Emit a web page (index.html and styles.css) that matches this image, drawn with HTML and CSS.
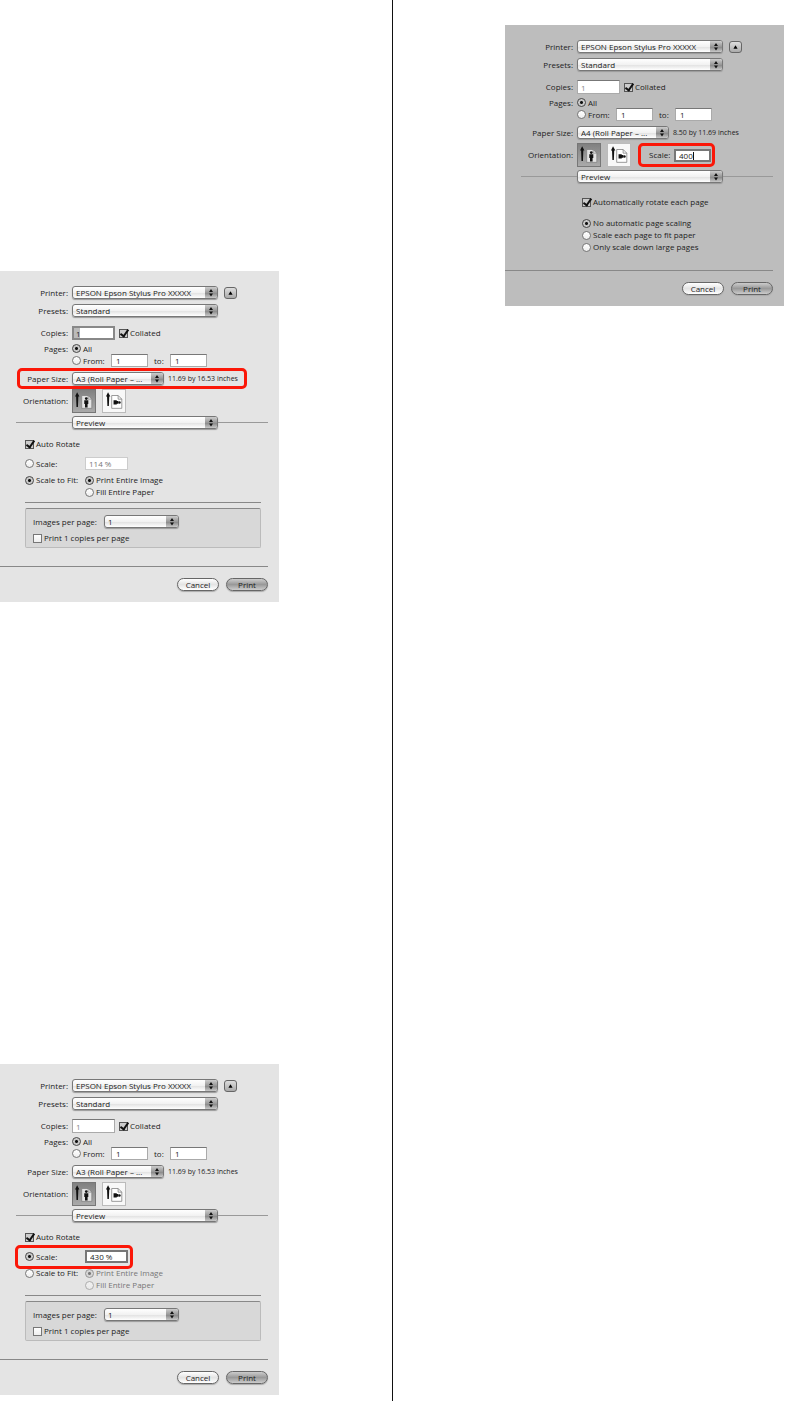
FILE: index.html
```html
<!DOCTYPE html>
<html lang="en">
<head>
    <meta charset="UTF-8">
    <meta name="viewport" content="width=device-width, initial-scale=1">
    <title>Print settings</title>
    <link rel="stylesheet" href="styles.css">
</head>
<body>

<svg class="defs" aria-hidden="true">
    <symbol id="arrows" viewBox="0 0 12 11">
        <path d="M6 2L8 5H4zM6 9.5L8 6.5H4z" fill="#111"/>
    </symbol>
    <symbol id="portrait" viewBox="0 0 24 23">
        <path d="M4.500 2L7 6.500H5.800L5.400 18H3.800L3.400 6.500H2.200z" fill="#111"/>
        <path d="M9.500 5.500h7l4 4v10h-11z" fill="#e4e4e4" stroke="#777" stroke-width=".7"/>
        <path d="M16.500 5.500v4h4" fill="none" stroke="#777" stroke-width=".7"/>
        <circle cx="14.500" cy="8.800" r="1.500" fill="#111"/>
        <path d="M12.300 10.700h4.400v4h-.8v3.800h-2.800v-3.800h-.8z" fill="#111"/>
    </symbol>
    <symbol id="landscape" viewBox="0 0 24 23">
        <path d="M5.500 2L8 6.500H6.800L6.400 17H4.800L4.400 6.500H3.200z" fill="#111"/>
        <path d="M9.500 5.500h7l4 4v10h-11z" fill="#fff" stroke="#777" stroke-width=".8"/>
        <path d="M16.500 5.500v4h4" fill="none" stroke="#777" stroke-width=".8"/>
        <path d="M11.500 10.800h3.500v.8h1.800v3h-1.800v.8h-3.500z" fill="#111"/>
        <circle cx="18" cy="13.100" r="1.300" fill="#111"/>
    </symbol>
</svg>

<main class="page">
    <div class="column left">

        <form class="dialog">
            <div class="row">
                <label class="name" for="a-printer">Printer:</label>
                <span class="select wide"><select id="a-printer"><option>EPSON Epson Stylus Pro XXXXX</option></select><svg><use href="#arrows"/></svg></span>
                <button type="button" class="toggle" aria-label="Hide details"><svg viewBox="0 0 12 12"><path d="M6 4L8.500 8H3.500z"/></svg></button>
            </div>
            <div class="row presets">
                <label class="name" for="a-presets">Presets:</label>
                <span class="select wide"><select id="a-presets"><option>Standard</option></select><svg><use href="#arrows"/></svg></span>
            </div>
            <div class="row copies">
                <label class="name" for="a-copies">Copies:</label>
                <input type="text" class="field selected" id="a-copies" value="1">
                <label class="option"><input type="checkbox" checked>Collated</label>
            </div>
            <div class="row all">
                <span class="name">Pages:</span>
                <label class="option"><input type="radio" name="a-pages" checked>All</label>
            </div>
            <div class="row">
                <span class="name"></span>
                <label class="option from"><input type="radio" name="a-pages">From:</label>
                <input type="text" class="field short" value="1" aria-label="From page">
                <label class="to" for="a-to">to:</label>
                <input type="text" class="field short" id="a-to" value="1">
            </div>
            <div class="row paper">
                <label class="name" for="a-paper">Paper Size:</label>
                <span class="select medium"><select id="a-paper"><option>A3 (Roll Paper – ...</option></select><svg><use href="#arrows"/></svg></span>
                <span class="size">11.69 by 16.53 inches</span>
                <span class="mark mark-paper"></span>
            </div>
            <div class="row orientation">
                <span class="name">Orientation:</span>
                <button type="button" class="orient on" aria-label="Portrait"><svg><use href="#portrait"/></svg></button>
                <button type="button" class="orient" aria-label="Landscape"><svg><use href="#landscape"/></svg></button>
            </div>
            <div class="pane">
                <span class="select wide"><select aria-label="Pane"><option>Preview</option></select><svg><use href="#arrows"/></svg></span>
            </div>

            <div class="preview">
                <label class="option"><input type="checkbox" checked>Auto Rotate</label>
                <div class="scaling scale-row">
                    <label class="option"><input type="radio" name="a-scale">Scale:</label>
                    <input type="text" class="field percent" value="114 %" aria-label="Scale percent" disabled>
                </div>
                <div class="scaling fit-row">
                    <label class="option"><input type="radio" name="a-scale" checked>Scale to Fit:</label>
                    <div class="stack">
                        <label class="option"><input type="radio" name="a-fit" checked>Print Entire Image</label>
                        <label class="option"><input type="radio" name="a-fit">Fill Entire Paper</label>
                    </div>
                </div>
                <div class="group">
                    <div class="row">
                        <label for="a-images">Images per page:</label>
                        <span class="select images"><select id="a-images"><option>1</option></select><svg><use href="#arrows"/></svg></span>
                    </div>
                    <label class="option"><input type="checkbox">Print 1 copies per page</label>
                </div>
            </div>
            <div class="actions">
                <button type="button" class="push">Cancel</button>
                <button type="button" class="push default">Print</button>
            </div>
        </form>

        <form class="dialog">
            <div class="row">
                <label class="name" for="b-printer">Printer:</label>
                <span class="select wide"><select id="b-printer"><option>EPSON Epson Stylus Pro XXXXX</option></select><svg><use href="#arrows"/></svg></span>
                <button type="button" class="toggle" aria-label="Hide details"><svg viewBox="0 0 12 12"><path d="M6 4L8.500 8H3.500z"/></svg></button>
            </div>
            <div class="row presets">
                <label class="name" for="b-presets">Presets:</label>
                <span class="select wide"><select id="b-presets"><option>Standard</option></select><svg><use href="#arrows"/></svg></span>
            </div>
            <div class="row copies">
                <label class="name" for="b-copies">Copies:</label>
                <input type="text" class="field dim" id="b-copies" value="1">
                <label class="option"><input type="checkbox" checked>Collated</label>
            </div>
            <div class="row all">
                <span class="name">Pages:</span>
                <label class="option"><input type="radio" name="b-pages" checked>All</label>
            </div>
            <div class="row">
                <span class="name"></span>
                <label class="option from"><input type="radio" name="b-pages">From:</label>
                <input type="text" class="field short" value="1" aria-label="From page">
                <label class="to" for="b-to">to:</label>
                <input type="text" class="field short" id="b-to" value="1">
            </div>
            <div class="row paper">
                <label class="name" for="b-paper">Paper Size:</label>
                <span class="select medium"><select id="b-paper"><option>A3 (Roll Paper – ...</option></select><svg><use href="#arrows"/></svg></span>
                <span class="size">11.69 by 16.53 inches</span>
            </div>
            <div class="row orientation">
                <span class="name">Orientation:</span>
                <button type="button" class="orient on" aria-label="Portrait"><svg><use href="#portrait"/></svg></button>
                <button type="button" class="orient" aria-label="Landscape"><svg><use href="#landscape"/></svg></button>
            </div>
            <div class="pane">
                <span class="select wide"><select aria-label="Pane"><option>Preview</option></select><svg><use href="#arrows"/></svg></span>
            </div>

            <div class="preview">
                <label class="option"><input type="checkbox" checked>Auto Rotate</label>
                <div class="scaling scale-row">
                    <label class="option"><input type="radio" name="b-scale" checked>Scale:</label>
                    <input type="text" class="field percent focus" value="430 %" aria-label="Scale percent">
                    <span class="mark mark-percent"></span>
                </div>
                <div class="scaling fit-row">
                    <label class="option"><input type="radio" name="b-scale">Scale to Fit:</label>
                    <div class="stack off">
                        <label class="option"><input type="radio" name="b-fit" checked disabled>Print Entire Image</label>
                        <label class="option"><input type="radio" name="b-fit" disabled>Fill Entire Paper</label>
                    </div>
                </div>
                <div class="group">
                    <div class="row">
                        <label for="b-images">Images per page:</label>
                        <span class="select images"><select id="b-images"><option>1</option></select><svg><use href="#arrows"/></svg></span>
                    </div>
                    <label class="option"><input type="checkbox">Print 1 copies per page</label>
                </div>
            </div>
            <div class="actions">
                <button type="button" class="push">Cancel</button>
                <button type="button" class="push default">Print</button>
            </div>
        </form>

    </div>
    <div class="column right">

        <form class="dialog dark">
            <div class="row">
                <label class="name" for="c-printer">Printer:</label>
                <span class="select wide"><select id="c-printer"><option>EPSON Epson Stylus Pro XXXXX</option></select><svg><use href="#arrows"/></svg></span>
                <button type="button" class="toggle" aria-label="Hide details"><svg viewBox="0 0 12 12"><path d="M6 4L8.500 8H3.500z"/></svg></button>
            </div>
            <div class="row presets">
                <label class="name" for="c-presets">Presets:</label>
                <span class="select wide"><select id="c-presets"><option>Standard</option></select><svg><use href="#arrows"/></svg></span>
            </div>
            <div class="row copies">
                <label class="name" for="c-copies">Copies:</label>
                <input type="text" class="field dim" id="c-copies" value="1">
                <label class="option"><input type="checkbox" checked>Collated</label>
            </div>
            <div class="row all">
                <span class="name">Pages:</span>
                <label class="option"><input type="radio" name="c-pages" checked>All</label>
            </div>
            <div class="row">
                <span class="name"></span>
                <label class="option from"><input type="radio" name="c-pages">From:</label>
                <input type="text" class="field short" value="1" aria-label="From page">
                <label class="to" for="c-to">to:</label>
                <input type="text" class="field short" id="c-to" value="1">
            </div>
            <div class="row paper">
                <label class="name" for="c-paper">Paper Size:</label>
                <span class="select medium"><select id="c-paper"><option>A4 (Roll Paper – ...</option></select><svg><use href="#arrows"/></svg></span>
                <span class="size">8.50 by 11.69 inches</span>
            </div>
            <div class="row orientation">
                <span class="name">Orientation:</span>
                <button type="button" class="orient on" aria-label="Portrait"><svg><use href="#portrait"/></svg></button>
                <button type="button" class="orient" aria-label="Landscape"><svg><use href="#landscape"/></svg></button>
                <div class="scale-box">
                    <label for="c-scale">Scale:</label>
                    <input type="text" class="field short focus" id="c-scale" value="400">
                    <span class="caret"></span>
                    <span class="mark mark-scale"></span>
                </div>
            </div>
            <div class="pane">
                <span class="select wide"><select aria-label="Pane"><option>Preview</option></select><svg><use href="#arrows"/></svg></span>
            </div>

            <div class="rotate">
                <label class="option"><input type="checkbox" checked>Automatically rotate each page</label>
                <div class="stack">
                    <label class="option"><input type="radio" name="c-fit" checked>No automatic page scaling</label>
                    <label class="option"><input type="radio" name="c-fit">Scale each page to fit paper</label>
                    <label class="option"><input type="radio" name="c-fit">Only scale down large pages</label>
                </div>
            </div>
            <div class="actions">
                <button type="button" class="push">Cancel</button>
                <button type="button" class="push default">Print</button>
            </div>
        </form>

    </div>
</main>

</body>
</html>
```
FILE: styles.css
```css
* { box-sizing: border-box; }
body { margin: 0; background: #fff; color: #1c1c1c; font: 500 8px/12px "Open Sans", "Noto Sans", sans-serif; }
input, select, button { margin: 0; font: inherit; color: inherit; }
.defs { display: none; }

.page { display: grid; grid-template-columns: 1fr 1fr; min-height: 100vh; }
.column { display: flex; flex-direction: column; }
.left { gap: 462px; padding: 271px 0 5px; border-right: 1px solid #111; }
.right { align-items: flex-end; padding: 25px 1px 0 0; }

.dialog { width: 279px; padding: 15px 11px 11px 0; background: #e4e4e4; }
.dark { background: #bdbdbd; }

/* form rows */
.row { position: relative; display: flex; align-items: center; }
.name { flex: none; width: 72px; padding-right: 4px; text-align: right; white-space: nowrap; }
.presets { margin-top: 5px; }
.copies { margin-top: 9px; }
.all { height: 11px; margin-top: 3px; }
.paper { margin-top: 5px; }
.orientation { margin-top: 4px; }
.option { display: flex; align-items: center; gap: 2px; height: 12px; white-space: nowrap; }
.copies .option { margin-left: 4px; }
.from { width: 39px; }
.to { width: 22px; padding-left: 6px; }
.size { margin-left: 4px; font-size: 7px; white-space: nowrap; }

/* pop-up menus */
.select { position: relative; display: block; height: 13px; }
.select select { display: block; appearance: none; width: 100%; height: 13px; padding: 0 14px 0 3px; border: 1px solid #777; border-radius: 3px; background: linear-gradient(#fff, #f2f2f2 50%, #e2e2e2 55%, #fff); line-height: 11px; box-shadow: 0 1px 1px #999; }
.select svg { position: absolute; top: 1px; right: 1px; width: 12px; height: 11px; border-radius: 0 2px 2px 0; background: linear-gradient(#ccc, #999 50%, #888 55%, #c8c8c8); pointer-events: none; }
.wide { width: 146px; }
.medium { width: 92px; }
.images { width: 75px; }
.toggle { width: 13px; height: 12px; margin-left: 6px; padding: 0; border: 1px solid #666; border-radius: 3px; background: linear-gradient(#ddd, #aaa); }
.toggle svg { display: block; width: 11px; height: 10px; }

/* text boxes */
.field { width: 43px; height: 14px; padding: 0 3px; border: 1px solid #aaa; border-top-color: #777; background: #fff; line-height: 12px; }
.short { width: 37px; height: 13px; padding-left: 4px; }
.dim { color: #888; }
.selected { border: 2px solid #888; padding-left: 2px; background: linear-gradient(to right, #bbb 6px, #fff 6px); }
.focus { border: 2px solid #777; padding-left: 3px; }
.percent { height: 13px; }
.percent:disabled { border-color: #ccc; color: #777; }

/* tick boxes and radios */
input[type="checkbox"], input[type="radio"] { position: relative; flex: none; appearance: none; width: 9px; height: 9px; border: 1px solid #777; background: linear-gradient(#fff, #eee); }
input[type="radio"] { border-radius: 50%; }
input[type="radio"]:checked { background: radial-gradient(circle, #111 0, #111 1px, #c4c4c4 2px, #d8d8d8 4px); border-color: #444; }
input[type="checkbox"]:checked { background: #ccc; border-color: #555; }
input[type="checkbox"]:checked::after { content: ""; position: absolute; left: 2px; top: -2px; width: 3px; height: 7px; border: solid #111; border-width: 0 2px 2px 0; transform: rotate(35deg); }
input[type="radio"]:disabled { opacity: .5; }
.off { color: #777; }

.orient { width: 24px; height: 24px; margin-right: 6px; padding: 0; border: 1px solid #bbb; background: #f8f8f8; }
.orient.on { border-color: #777; background: linear-gradient(#808080, #aaa); }
.orient svg { display: block; width: 22px; height: 22px; }

.pane { display: flex; align-items: center; margin: 3px 0 0 16px; }
.pane::before, .pane::after { content: ""; height: 1px; background: #999; }
.pane::before { width: 56px; }
.pane::after { flex: 1; }

/* preview options */
.preview { padding: 9px 7px 0 25px; }
.scaling { position: relative; display: grid; grid-template-columns: 60px 1fr; }
.scale-row { align-items: center; margin-top: 7px; }
.fit-row { align-items: start; padding: 4px 0; border-bottom: 1px solid #888; }
.group { margin-top: 5px; padding: 6px 7px 3px; border: 1px solid #bbb; border-top-color: #888; border-radius: 2px; background: #d8d8d8; }
.group .row label { width: 71px; white-space: nowrap; }
.group .option { margin-top: 4px; }
.rotate { padding: 13px 0 0 77px; }
.rotate .stack { margin-top: 9px; }

.actions { display: flex; justify-content: flex-end; gap: 7px; margin-top: 18px; padding-top: 11px; border-top: 1px solid #888; }
.dark .actions { margin-top: 17px; }
.push { width: 42px; height: 13px; padding: 0; border: 1px solid #666; border-radius: 7px; background: linear-gradient(#fff, #e4e4e4 50%, #fff); line-height: 11px; box-shadow: 0 1px 1px #aaa; }
.default { background: linear-gradient(#ccc, #999 50%, #ccc); }

/* red call-outs */
.mark { position: absolute; border: 3px solid #fb1708; border-radius: 5px; pointer-events: none; }
.mark-paper { left: 17px; top: -4px; width: 230px; height: 21px; }
.mark-percent { left: -10px; top: -5px; width: 118px; height: 24px; }
.mark-scale { inset: -6px -4px -5px -11px; }
.scale-box { position: relative; display: flex; align-items: center; justify-content: space-between; width: 62px; margin-left: 12px; }
.caret { position: absolute; left: 44px; top: 3px; width: 1px; height: 8px; background: #111; }
```
